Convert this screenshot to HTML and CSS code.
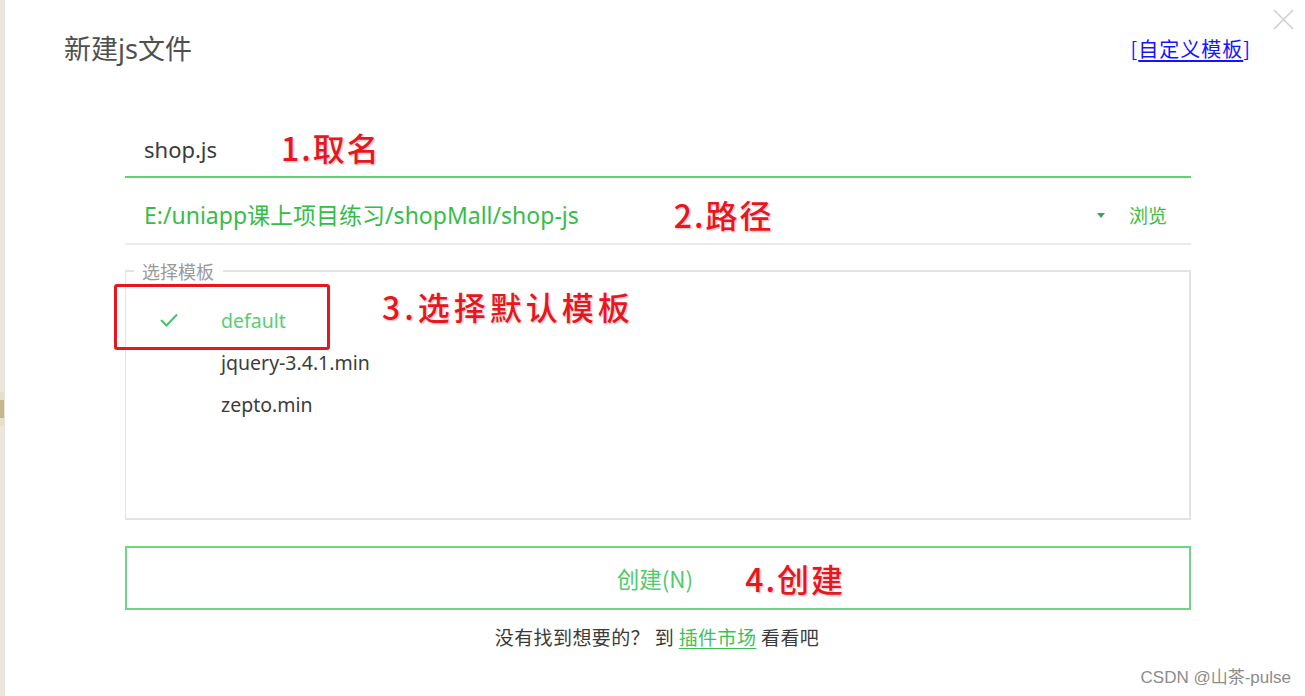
FILE: index.html
```html
<!DOCTYPE html>
<html lang="zh-CN">
<head>
<meta charset="utf-8">
<title>新建js文件</title>
<link rel="stylesheet" href="styles.css">
</head>
<body>
<div class="page">
  <div class="strip"><div class="strip-mark"></div></div>
  <div class="dialog">
    <header class="head">
      <h1 class="title">新建js文件</h1>
      <a class="custom-link" href="#">[<u>自定义模板</u>]</a>
    </header>
    <button class="close" aria-label="关闭">
      <svg width="21" height="21" viewBox="0 0 21 21"><path d="M1 1 L20 20 M20 1 L1 20" stroke="#cfcfcf" stroke-width="1.6" fill="none"/></svg>
    </button>

    <div class="form">
      <div class="row name-row">
        <span class="name-val">shop.js</span>
        <span class="note note-name">1.取名</span>
      </div>
      <div class="row path-row">
        <span class="path-val">E:/uniapp课上项目练习/shopMall/shop-js</span>
        <span class="note note-path">2.路径</span>
        <span class="spacer"></span>
        <svg class="caret" width="8" height="5" viewBox="0 0 8 5"><path d="M0 0 H8 L4 5 Z" fill="#3f9f5c"/></svg>
        <span class="browse">浏览</span>
      </div>

      <fieldset class="tpl">
        <legend class="tpl-legend">选择模板</legend>
        <ul class="tpl-list">
          <li class="tpl-item selected">
            <span class="check"><svg width="18" height="14" viewBox="0 0 18 14"><path d="M1 7 L6.5 12.5 L17 1.5" stroke="#4fbf6e" stroke-width="2" fill="none"/></svg></span>
            <span class="tpl-name">default</span>
            <span class="red-box"></span>
            <span class="note note-tpl">3.选择默认模板</span>
          </li>
          <li class="tpl-item">
            <span class="check"></span>
            <span class="tpl-name">jquery-3.4.1.min</span>
          </li>
          <li class="tpl-item">
            <span class="check"></span>
            <span class="tpl-name">zepto.min</span>
          </li>
        </ul>
      </fieldset>

      <button class="create"><span class="create-label">创建(N)<span class="note note-create">4.创建</span></span></button>

      <p class="footer">没有找到想要的？ 到 <a class="market" href="#">插件市场</a> 看看吧</p>
    </div>

    <div class="watermark">CSDN @山茶-pulse</div>
  </div>
</div>
</body>
</html>
```

FILE: styles.css
```css
* { box-sizing: border-box; }

html, body {
  margin: 0;
  padding: 0;
  background: #ffffff;
}

body {
  font-family: "Noto Sans", "Noto Sans CJK SC", sans-serif;
  color: #333333;
}

.page {
  display: flex;
  width: 1305px;
  height: 696px;
  overflow: hidden;
}

.strip {
  width: 5px;
  flex: none;
  background: #ece7d9;
  border-right: 1px solid #e4e4e4;
  padding-top: 392px;
}

.strip-mark {
  width: 4px;
  height: 34px;
  background: #e2d9bf;
  border-top: 8px solid #e6dfc9;
  border-bottom: 8px solid #e6dfc9;
}

.strip-mark::after {
  content: "";
  display: block;
  width: 4px;
  height: 18px;
  background: #c6b688;
}

.dialog {
  flex: 1;
  position: relative;
}

.head {
  height: 98px;
  display: flex;
  align-items: center;
  justify-content: space-between;
  padding: 0 54px 0 59px;
}

.title {
  margin: 0;
  font-size: 27px;
  font-weight: 400;
  color: #4f4f4f;
  line-height: 30px;
}

.custom-link {
  font-family: "Noto Sans CJK SC", sans-serif;
  font-size: 20px;
  letter-spacing: 1px;
  color: #1414ff;
  text-decoration: none;
  line-height: 24px;
}

.custom-link u {
  text-decoration: underline;
  text-underline-offset: 3px;
}

.close {
  position: absolute;
  top: 9px;
  right: 11px;
  width: 21px;
  height: 21px;
  padding: 0;
  border: 0;
  background: none;
  display: block;
}

.close svg { display: block; }

.form {
  margin-left: 120px;
  width: 1066px;
}

.row {
  display: flex;
  align-items: center;
}

.name-row {
  height: 80px;
  padding: 24px 0 0 19px;
  border-bottom: 2px solid #5fd370;
}

.name-val {
  font-size: 22px;
  color: #3a3a3a;
  line-height: 28px;
}

.note {
  font-family: "Noto Sans CJK SC", sans-serif;
  font-weight: 500;
  color: #e8161e;
  font-size: 32px;
  line-height: 38px;
  letter-spacing: 2px;
  text-shadow: 0 0 2px #ffffff, 1px 1px 2px rgba(0, 0, 0, 0.35);
  white-space: nowrap;
}

.note-name { margin-left: 64px; margin-top: -4px; }

.path-row {
  height: 67px;
  padding: 9px 24px 0 19px;
  border-bottom: 2px solid #ebebeb;
}

.path-val {
  font-size: 23px;
  color: #36bd48;
  line-height: 28px;
}

.note-path { margin-left: 95px; margin-top: -2px; }

.spacer { flex: 1; }

.caret { display: block; margin-right: 24px; }

.browse {
  font-family: "Noto Sans CJK SC", sans-serif;
  font-size: 19px;
  color: #3bbd4b;
  line-height: 24px;
}

.tpl {
  margin: 15px 0 0;
  padding: 0;
  border: 1px solid #e3e3e3;
  border-width: 2px 2px 2px 1px;
  min-width: 0;
}

.tpl-legend {
  margin-left: 8px;
  padding: 0 9px 0 8px;
  font-family: "Noto Sans CJK SC", sans-serif;
  font-size: 18px;
  line-height: 22px;
  color: #9a9a9a;
}

.tpl-list {
  list-style: none;
  margin: 0;
  padding: 18px 0 0 34px;
  height: 236px;
}

.tpl-item {
  position: relative;
  display: flex;
  align-items: center;
  height: 42px;
}

.check {
  width: 61px;
  flex: none;
  display: flex;
  align-items: center;
}

.check svg { display: block; margin-top: -3px; }

.tpl-name {
  font-size: 19.5px;
  line-height: 24px;
  color: #3c3c3c;
}

.selected .tpl-name { color: #56cf75; }

.red-box {
  position: absolute;
  left: -46px;
  top: -16px;
  width: 216px;
  height: 66px;
  border: 3px solid #e8161e;
  border-radius: 3px;
}

.note-tpl {
  position: absolute;
  left: 222px;
  top: -13px;
  letter-spacing: 4px;
}

.create {
  display: flex;
  align-items: center;
  justify-content: center;
  width: 100%;
  height: 64px;
  margin-top: 26px;
  border: 2px solid #6fd683;
  background: #ffffff;
  padding: 0;
  font-family: "Noto Sans CJK SC", sans-serif;
  font-size: 22.5px;
  color: #4fcc6c;
}

.create-label {
  position: relative;
  line-height: 28px;
  margin-left: -6px;
}

.note-create {
  position: absolute;
  left: calc(100% + 52px);
  top: -5px;
}

.footer {
  margin: 14px 0 0;
  text-align: center;
  font-family: "Noto Sans CJK SC", sans-serif;
  font-size: 19px;
  letter-spacing: 0.4px;
  line-height: 26px;
  color: #3a3a3a;
  padding-right: 2px;
}

.market {
  color: #3cbf58;
  text-decoration: underline;
  text-underline-offset: 3px;
}

.watermark {
  position: absolute;
  right: 14px;
  bottom: 8px;
  font-family: "Liberation Sans", "Noto Sans CJK SC", sans-serif;
  font-size: 17px;
  color: #8c8c8c;
  line-height: 20px;
}
```
